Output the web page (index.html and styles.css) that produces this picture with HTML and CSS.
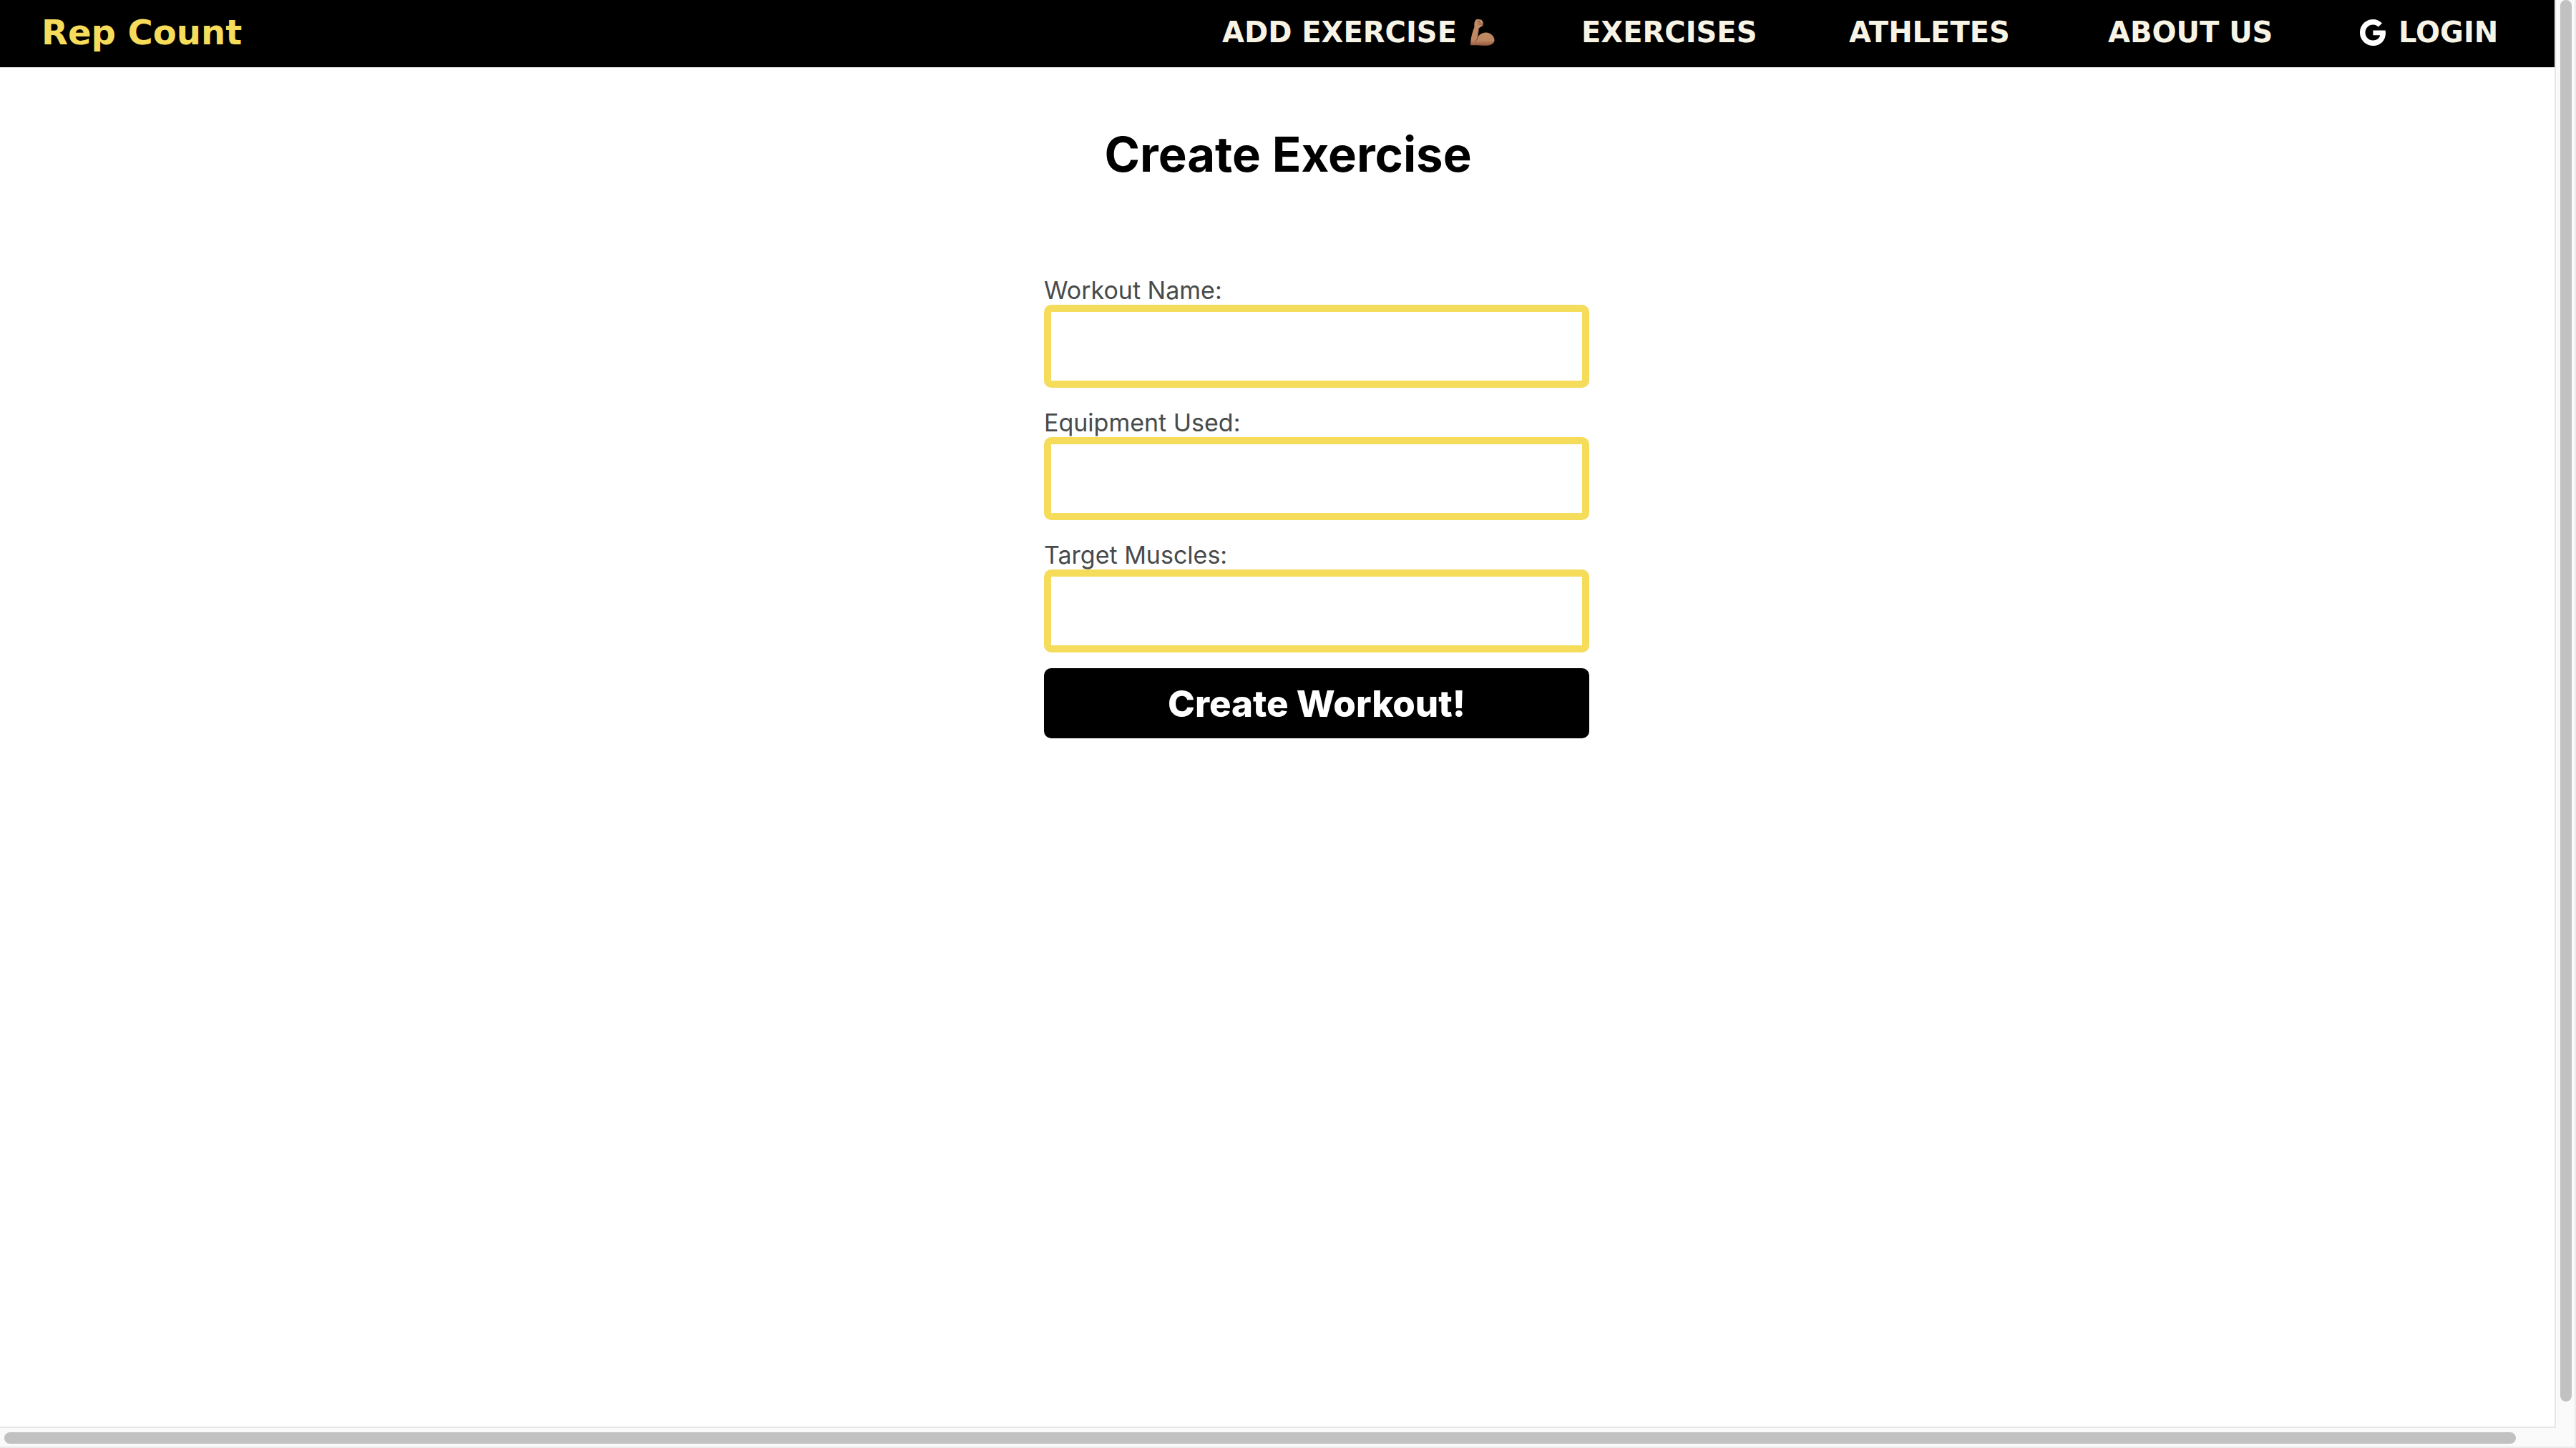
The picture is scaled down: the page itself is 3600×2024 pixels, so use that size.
FILE: index.html
```html
<!DOCTYPE html>
<html lang="en">
<head>
  <meta charset="utf-8">
  <meta name="viewport" content="width=device-width, initial-scale=1">
  <title>Rep Count</title>
  <link rel="stylesheet" href="styles.css">
</head>
<body>
  <div class="viewport">
    <div class="page">
      <header class="navbar">
        <a class="brand" href="#">Rep Count</a>
        <nav class="nav">
          <a class="nav-link" href="#">ADD EXERCISE
            <svg class="flex-icon" viewBox="94 42 108 118" aria-hidden="true">
              <defs>
                <linearGradient id="skin" x1="0" y1="0" x2="0" y2="1">
                  <stop offset="0" stop-color="#c48f69"/>
                  <stop offset="0.8" stop-color="#bd8660"/>
                  <stop offset="1" stop-color="#94573f"/>
                </linearGradient>
              </defs>
              <path fill="url(#skin)" d="M97 155C96 132 103 102 113 78C112 65 113 53 119 47C124 44 130 44 134 46C140 44 147 48 147 53C152 56 151 62 149 65C151 71 147 76 141 76C138 80 134 80 132 83C130 98 128 112 127 123C133 108 148 101 163 101C182 102 197 116 198 132C199 145 185 155 166 156C142 157 116 155 97 155Z"/>
              <path fill="none" stroke="#704230" stroke-width="3" stroke-linecap="round" d="M127 56L136 54L137 60M129 64L135 66L148 65M127 124C124 131 121 135 117 137M132 83C130 98 128 112 127 123"/>
            </svg>
          </a>
          <a class="nav-link" href="#">EXERCISES</a>
          <a class="nav-link" href="#">ATHLETES</a>
          <a class="nav-link" href="#">ABOUT US</a>
          <a class="nav-link" href="#">
            <svg class="google-icon" viewBox="0 0 36 37" aria-hidden="true">
              <path fill="#fff" d="M31 5.500L25.800 10.600C23.700 8.600 21.200 7.500 18.400 7.500C12.300 7.500 7.500 12.400 7.500 18.500C7.500 24.600 12.300 29.500 18.400 29.500C23.500 29.500 27.200 26.700 28.200 22.300H18.400V15.400H35.600C35.900 16.600 36 17.800 36 19C36 29.600 28.900 37 18.400 37C8.200 37 0 28.700 0 18.500C0 8.300 8.200 0 18.400 0C23.300 0 27.600 2 31 5.500Z"/>
            </svg>
            LOGIN
          </a>
        </nav>
      </header>
      <main class="content">
        <h1 class="title">Create Exercise</h1>
        <form class="form">
          <div class="field">
            <label class="label" for="name">Workout Name:</label>
            <input class="input" id="name" type="text">
          </div>
          <div class="field">
            <label class="label" for="equipment">Equipment Used:</label>
            <input class="input" id="equipment" type="text">
          </div>
          <div class="field">
            <label class="label" for="muscles">Target Muscles:</label>
            <input class="input" id="muscles" type="text">
          </div>
          <button class="submit" type="button">Create Workout!</button>
        </form>
      </main>
    </div>
    <div class="track track-y"><div class="thumb"></div></div>
    <div class="track track-x"><div class="thumb"></div></div>
  </div>
</body>
</html>
```
FILE: styles.css
```css
* {
  box-sizing: border-box;
}

body {
  margin: 0;
  background: #fff;
  font-family: Inter, "Liberation Sans", sans-serif;
}

.viewport {
  display: grid;
  grid-template-columns: minmax(0, 1fr) 26px;
  grid-template-rows: minmax(0, 1fr) 26px;
  height: 100vh;
  border-right: 2px solid #ebebeb;
  border-bottom: 2px solid #ebebeb;
  background: #fafafa;
}

.page {
  border-right: 2px solid #e7e7e7;
  border-bottom: 2px solid #e7e7e7;
  background: #fff;
}

/* Header */

.navbar {
  display: flex;
  align-items: center;
  justify-content: space-between;
  height: 94px;
  padding: 0 0 4px 58px;
  background: #000;
  font-family: "DejaVu Sans", sans-serif;
  font-weight: 700;
}

.brand {
  color: #f6dc5b;
  font-size: 48px;
  line-height: 56px;
  text-decoration: none;
}

.nav {
  display: grid;
  grid-template-columns: 502px 374px 362px 352px 272px;
}

.nav-link {
  display: flex;
  align-items: center;
  gap: 18px;
  color: #f7f4e6;
  font-size: 40px;
  line-height: 48px;
  text-decoration: none;
  white-space: nowrap;
}

.flex-icon {
  width: 36px;
  height: 39px;
}

.google-icon {
  width: 36px;
  height: 37px;
}

/* Create form */

.content {
  display: flex;
  flex-direction: column;
  align-items: center;
  padding: 80px 0 0 30px;
}

.title {
  margin: 0;
  color: #000;
  font-size: 67px;
  font-weight: 700;
  line-height: 84px;
}

.form {
  display: flex;
  flex-direction: column;
  gap: 22px;
  padding: 124px 0 0 80px;
}

.field {
  display: flex;
  flex-direction: column;
  width: 762px;
  max-width: 100%;
  padding-bottom: 3px;
}

.field:nth-child(3) {
  padding-bottom: 0;
}

.label {
  padding-top: 4px;
  color: #484b4b;
  font-size: 34px;
  line-height: 40px;
}

.input {
  height: 116px;
  padding: 0 24px;
  border: 10px solid #f6dc5b;
  border-radius: 10px;
  background: #fff;
  font: inherit;
  font-size: 34px;
}

.submit {
  height: 98px;
  border: 0;
  border-radius: 10px;
  background: #000;
  color: #fff;
  font: inherit;
  font-size: 51px;
  font-weight: 800;
}

/* Scroll tracks */

.track-y {
  padding: 0 4px 37px 6px;
}

.track-x {
  padding: 6px 56px 4px 6px;
}

.thumb {
  height: 100%;
  border-radius: 8px;
  background: #c1c1c1;
}
```
